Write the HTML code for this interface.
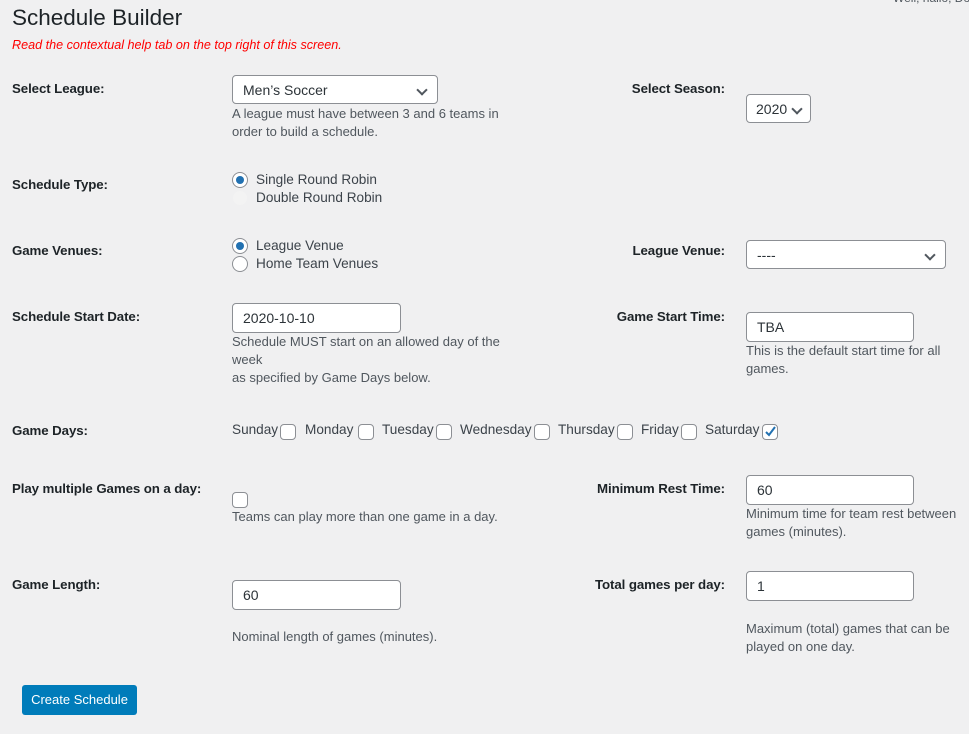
<!DOCTYPE html>
<html><head><meta charset="utf-8"><style>
body{margin:0;width:969px;height:734px;background:#f0f0f1;font-family:"Liberation Sans",sans-serif;color:#1d2327;position:relative;overflow:hidden;font-size:13px}
.a{position:absolute;white-space:nowrap;line-height:18px}
.l{font-weight:bold;font-size:13.3px;letter-spacing:-0.1px;color:#1d2327}
.r{text-align:right;width:300px}
.d{color:#50575e}
.box{position:absolute;background:#fff;border:1px solid #8c8f94;border-radius:4px;box-sizing:border-box;line-height:28px;padding-left:10px;font-size:14px;color:#2c3338}
.chev{position:absolute;right:11px;top:10px;width:6px;height:6px;border-right:2px solid #50575e;border-bottom:2px solid #50575e;transform:rotate(45deg)}
.rad{position:absolute;width:16px;height:16px;border:1px solid #8c8f94;border-radius:50%;box-sizing:border-box;background:#fff}
.rad.on::after{content:"";position:absolute;left:3px;top:3px;width:8px;height:8px;border-radius:50%;background:#2271b1}
.cb{position:absolute;width:16px;height:16px;border:1px solid #8c8f94;border-radius:4px;box-sizing:border-box;background:#fff}
.t{font-size:13.6px;color:#3c434a}
</style></head><body>
<div class="a" style="left:12px;top:4px;font-size:22.5px;line-height:28px;color:#1d2327">Schedule Builder</div>
<div class="a" style="left:893px;top:-11px;font-size:12px;color:#50575e">Well, hallo, Do</div>
<div class="a" style="left:12px;top:36px;font-size:12.6px;font-style:italic;color:#f00">Read the contextual help tab on the top right of this screen.</div>

<div class="a l" style="left:12px;top:80px">Select League:</div>
<div class="box" style="left:232px;top:75px;width:206px;height:29px">Men’s Soccer<div class="chev"></div></div>
<div class="a d" style="left:232px;top:105px">A league must have between 3 and 6 teams in<br>order to build a schedule.</div>
<div class="a l r" style="left:425px;top:80px">Select Season:</div>
<div class="box" style="left:746px;top:94px;width:65px;height:29px;padding-left:9px">2020<div class="chev" style="right:9px"></div></div>

<div class="a l" style="left:12px;top:176px">Schedule Type:</div>
<div class="rad on" style="left:232px;top:172px"></div>
<div class="a t" style="left:256px;top:171px">Single Round Robin</div>
<div class="rad" style="left:232px;top:190px;border-color:#f0f0f1;background:#f3f3f3"></div>
<div class="a t" style="left:256px;top:189px">Double Round Robin</div>

<div class="a l" style="left:12px;top:242px">Game Venues:</div>
<div class="rad on" style="left:232px;top:238px"></div>
<div class="a t" style="left:256px;top:237px">League Venue</div>
<div class="rad" style="left:232px;top:256px"></div>
<div class="a t" style="left:256px;top:255px">Home Team Venues</div>
<div class="a l r" style="left:425px;top:242px">League Venue:</div>
<div class="box" style="left:746px;top:240px;width:200px;height:29px">----<div class="chev"></div></div>

<div class="a l" style="left:12px;top:308px">Schedule Start Date:</div>
<div class="box" style="left:232px;top:303px;width:169px;height:30px">2020-10-10</div>
<div class="a d" style="left:232px;top:333px">Schedule MUST start on an allowed day of the<br>week<br>as specified by Game Days below.</div>
<div class="a l r" style="left:425px;top:308px">Game Start Time:</div>
<div class="box" style="left:746px;top:312px;width:168px;height:30px">TBA</div>
<div class="a d" style="left:746px;top:342px">This is the default start time for all<br>games.</div>

<div class="a l" style="left:12px;top:422px">Game Days:</div>
<div class="a t" style="left:232px;top:421px">Sunday</div><div class="cb" style="left:280px;top:424px"></div>
<div class="a t" style="left:305px;top:421px">Monday</div><div class="cb" style="left:358px;top:424px"></div>
<div class="a t" style="left:382px;top:421px">Tuesday</div><div class="cb" style="left:436px;top:424px"></div>
<div class="a t" style="left:460px;top:421px">Wednesday</div><div class="cb" style="left:534px;top:424px"></div>
<div class="a t" style="left:558px;top:421px">Thursday</div><div class="cb" style="left:617px;top:424px"></div>
<div class="a t" style="left:641px;top:421px">Friday</div><div class="cb" style="left:681px;top:424px"></div>
<div class="a t" style="left:705px;top:421px">Saturday</div><div class="cb" style="left:762px;top:424px"><svg width="14" height="14" style="position:absolute;left:0;top:0"><path d="M3 7 L6 10 L12 2" fill="none" stroke="#2271b1" stroke-width="2"/></svg></div>

<div class="a l" style="left:12px;top:480px">Play multiple Games on a day:</div>
<div class="cb" style="left:232px;top:492px"></div>
<div class="a d" style="left:232px;top:508px">Teams can play more than one game in a day.</div>
<div class="a l r" style="left:425px;top:480px">Minimum Rest Time:</div>
<div class="box" style="left:746px;top:475px;width:168px;height:30px">60</div>
<div class="a d" style="left:746px;top:505px">Minimum time for team rest between<br>games (minutes).</div>

<div class="a l" style="left:12px;top:576px">Game Length:</div>
<div class="box" style="left:232px;top:580px;width:169px;height:30px">60</div>
<div class="a d" style="left:232px;top:628px">Nominal length of games (minutes).</div>
<div class="a l r" style="left:425px;top:576px">Total games per day:</div>
<div class="box" style="left:746px;top:571px;width:168px;height:30px">1</div>
<div class="a d" style="left:746px;top:620px">Maximum (total) games that can be<br>played on one day.</div>

<div style="position:absolute;left:22px;top:685px;width:115px;height:30px;background:#007cba;border-radius:3px;color:#fff;text-align:center;line-height:30px;font-size:13px">Create Schedule</div>
</body></html>
